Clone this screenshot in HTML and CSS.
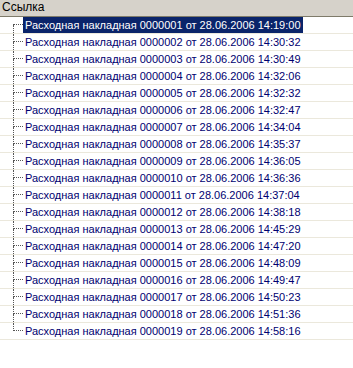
FILE: index.html
```html
<!DOCTYPE html>
<html lang="ru">
<head>
    <meta charset="UTF-8">
    <title>Ссылка</title>
    <link rel="stylesheet" href="styles.css">
</head>
<body>
    <div class="header">Ссылка</div>
    <div class="list" id="list"></div>
    <script>
    var times = ["14:19:00", "14:30:32", "14:30:49", "14:32:06", "14:32:32", "14:32:47",
        "14:34:04", "14:35:37", "14:36:05", "14:36:36", "14:37:04", "14:38:18",
        "14:45:29", "14:47:20", "14:48:09", "14:49:47", "14:50:23", "14:51:36", "14:58:16"];
    var list = document.getElementById("list");
    times.forEach(function (t, i) {
        var num = String(i + 1).padStart(7, "0");
        var row = document.createElement("div");
        row.className = "row" + (i === 0 ? " first" : "") + (i === times.length - 1 ? " last" : "");
        row.innerHTML =
            '<div class="tree"><div class="up"></div><div class="down"></div></div>' +
            '<span class="label' + (i === 0 ? ' selected' : '') + '">Расходная накладная ' + num +
            ' от 28.06.2006 ' + t + '</span>';
        list.appendChild(row);
    });
    </script>
</body>
</html>
```

FILE: styles.css
```css
body {
    margin: 0;
    background: white;
    font-family: "Liberation Sans", Arial, sans-serif;
    font-size: 11px;
}
.header {
    height: 16px;
    line-height: 15px;
    padding-left: 2px;
    font-size: 12px;
    background: #d6d2ca;
    color: #000;
    border-bottom: 1px solid #7f7b6a;
}
.row {
    display: flex;
    height: 16px;
    border-bottom: 1px solid #ebe8dc;
}
.tree {
    width: 10px;
    margin-left: 13px;
    display: flex;
    flex-direction: column;
}
.up {
    height: 8px;
    border-left: 1px dotted #555;
    border-bottom: 1px dotted #555;
    box-sizing: border-box;
}
.down {
    height: 9px;
    border-left: 1px dotted #555;
}
.first .up {
    border-left: none;
}
.last .down {
    border-left: none;
}
.label {
    height: 16px;
    line-height: 16px;
    padding: 0 2px 0 2px;
    color: #000070;
    white-space: nowrap;
}
.label.selected {
    background: #0a246a;
    color: white;
}
```
